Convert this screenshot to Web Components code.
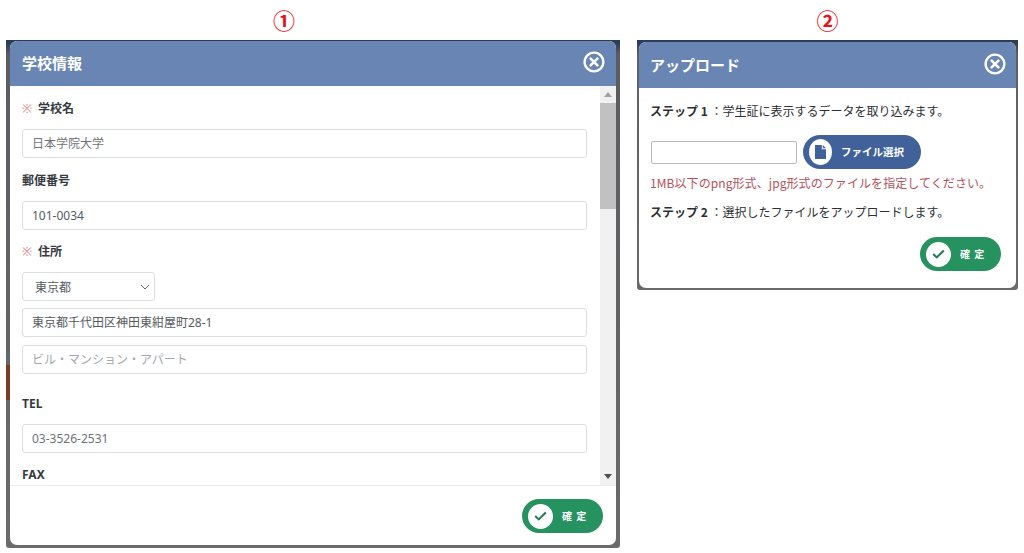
<!DOCTYPE html>
<html lang="ja"><head><meta charset="utf-8"><title>学校情報</title>
<style>
html,body{margin:0;padding:0;background:#fff;overflow:hidden}
body{width:1024px;height:553px;font-family:"Noto Sans","Noto Sans CJK JP",sans-serif;color:#212529}
</style></head><body>
<screen-board>
  <modal-panel slot="a" mark="①" heading="学校情報" variant="large">
    <form-field label="学校名" required><text-box value="日本学院大学" dim></text-box></form-field>
    <form-field label="郵便番号"><text-box value="101-0034"></text-box></form-field>
    <form-field label="住所" required>
      <select-box value="東京都"></select-box>
      <text-box value="東京都千代田区神田東紺屋町28-1" gap></text-box>
      <text-box placeholder="ビル・マンション・アパート" gap></text-box>
    </form-field>
    <form-field label="TEL" wide><text-box value="03-3526-2531" dim></text-box></form-field>
    <form-field label="FAX"><text-box value=""></text-box></form-field>
    <pill-button slot="footer" tone="green" icon="check" text="確 定"></pill-button>
  </modal-panel>
  <modal-panel slot="b" mark="②" heading="アップロード" variant="small">
    <upload-steps></upload-steps>
    <pill-button slot="footer" tone="green" icon="check" text="確 定"></pill-button>
  </modal-panel>
</screen-board>
<script>
function def(name, css, html, init){
  customElements.define(name, class extends HTMLElement{
    connectedCallback(){
      if(this.shadowRoot) return;
      const r=this.attachShadow({mode:'open'});
      r.innerHTML='<style>'+css+'</style>'+(typeof html==='function'?html(this):html);
      if(init) init(this,r);
    }
  });
}
def('screen-board',
 `:host{display:flex;width:1024px;height:553px;padding:0 0 0 6px;box-sizing:border-box;align-items:flex-start;gap:17px}`,
 `<slot name="a"></slot><slot name="b"></slot>`);
def('modal-panel',
 `:host{display:flex;flex-direction:column;align-items:center;flex:none;color:#212529}
  :host([variant=large]){width:614px}
  :host([variant=small]){width:381px}
  .mark{font:700 22px/22px "Noto Sans CJK JP",sans-serif;color:#e3141c;height:22px;margin-top:8px;margin-bottom:10px}
  :host([variant=large]) .mark{margin-right:58px}
  .frame{width:100%;box-sizing:border-box;padding:1px 4px 3px 4px;border-radius:0 0 3px 3px;
    background:linear-gradient(#2c3c58 0,#2c3c58 3px,#5f6062 14px,#6a6a6a 100%)}
  :host([variant=large]) .frame{background:linear-gradient(#7a3a28,#7a3a28) 0 325px/4px 35px no-repeat,linear-gradient(#2c3c58 0,#2c3c58 3px,#5a5c60 14px,#6b6b6b 100%);height:508px}
  :host([variant=small]) .frame{height:250px;padding:2px 2px 2px 2px}
  .box{background:#fff;border-radius:7px;height:100%;display:flex;flex-direction:column;overflow:hidden}
  header{flex:none;height:45px;background:#6885b4;color:#fff;display:flex;align-items:center;justify-content:space-between;padding:0 11px 0 12px;font:700 15px/1 "Noto Sans CJK JP",sans-serif}
  :host([variant=small]) header{height:46px;padding:0 10px 0 11px}
  header span{padding-bottom:3px}
  :host([variant=small]) header span{padding-bottom:1px}
  svg.x{width:22px;height:22px;display:block;margin-top:-3px}
  .main{flex:1;min-height:0;display:flex}
  .scroll{flex:1;min-width:0;overflow:hidden;padding:14px 13px 0 12px}
  :host([variant=small]) .scroll{padding:14px 11px 0 11px;display:block}
  .bar{flex:none;width:16px;background:#f1f1f1;display:flex;flex-direction:column;align-items:center}
  :host([variant=small]) .bar{display:none}
  .arrow{height:17px;display:flex;align-items:center;justify-content:center;flex:none}
  .thumb{height:106px;width:100%;background:#c1c1c1;flex:none}
  .track{flex:1}
  footer{flex:none;display:flex;justify-content:flex-end;padding:13px 13px 13px 12px;border-top:1px solid #e9ecef;height:60px;box-sizing:border-box}
  :host([variant=small]) footer{border-top:0;padding:0 15px 0 0;height:auto;margin-bottom:17px}`,
 h=>`<div class="mark">${h.getAttribute('mark')}</div>
  <div class="frame"><div class="box">
   <header><span>${h.getAttribute('heading')}</span>
    <svg class="x" viewBox="0 0 22 22" aria-hidden="true"><circle cx="11" cy="11" r="9.4" fill="none" stroke="#fff" stroke-width="2.4"/><path d="M7.6 7.6l6.8 6.8M14.4 7.6l-6.8 6.8" stroke="#fff" stroke-width="2.6" stroke-linecap="round"/></svg></header>
   <div class="main"><div class="scroll"><slot></slot></div>
    <div class="bar"><div class="arrow"><svg width="8" height="5" viewBox="0 0 8 5"><path d="M4 0L8 5H0z" fill="#a3a3a3"/></svg></div><div class="thumb"></div><div class="track"></div><div class="arrow"><svg width="8" height="5" viewBox="0 0 8 5"><path d="M0 0H8L4 5z" fill="#505050"/></svg></div></div></div>
   <footer><slot name="footer"></slot></footer>
  </div></div>`);
def('form-field',
 `:host{display:block;margin-bottom:13.5px}
  :host([wide]){margin-top:21px;margin-bottom:12.5px}
  .l{font:700 12px/18px "Noto Sans","Noto Sans CJK JP",sans-serif;color:#343a40;margin-bottom:11px;height:18px}
  i{font-style:normal;font-weight:400;color:#e08a8a;margin-right:6px}`,
 h=>`<div class="l">${h.hasAttribute('required')?'<i>※</i>':''}${h.getAttribute('label')}</div><slot></slot>`);
def('text-box',
 `:host{display:block;width:565px}
  :host([gap]){margin-top:7px}
  :host([gap]:last-of-type){margin-top:8px}
  div{box-sizing:border-box;height:29px;border:1px solid #dcdfe2;border-radius:3px;background:#fff;padding:0 9px;font:400 12px/27px "Noto Sans","Noto Sans CJK JP",sans-serif;color:#555b61;white-space:nowrap}
  :host([dim]) div{color:#6c7278}
  .p{color:#a4a8ac}`,
 h=>{const v=h.getAttribute('value');const p=h.getAttribute('placeholder');return `<div class="${p?'p':''}">${v||p||''}</div>`});
def('select-box',
 `:host{display:block;width:133px}
  div{box-sizing:border-box;height:29px;border:1px solid #dcdfe2;border-radius:3px;padding:0 4px 0 12px;font:400 12px/26px "Noto Sans CJK JP",sans-serif;color:#555b61;display:flex;justify-content:space-between;align-items:center}`,
 h=>`<div><span>${h.getAttribute('value')}</span><svg width="10" height="6" viewBox="0 0 10 6"><path d="M1 1l4 4 4-4" fill="none" stroke="#666" stroke-width="1"/></svg></div>`);
def('pill-button',
 `:host{display:inline-flex;align-items:center;height:34px;border-radius:17px;color:#fff;padding:0 0 0 6px;box-sizing:border-box;font:700 10px/1 "Noto Sans CJK JP",sans-serif;white-space:nowrap}
  :host([tone=green]){background:#26925f;width:81px}
  :host([tone=blue]){background:#41619a;width:118px;font-size:10.5px}
  .c{width:25px;height:25px;border-radius:50%;background:#fff;display:flex;align-items:center;justify-content:center;flex:none;margin-right:9px}
  :host([tone=blue]) .c{width:23px;height:26px;margin-right:9px}
  :host([tone=green]) span{letter-spacing:1px}`,
 h=>{const ic=h.getAttribute('icon')==='check'
   ?'<svg width="13" height="10" viewBox="0 0 13 10"><path d="M1.2 5l3.6 3.4 7-7" fill="none" stroke="#2a7a58" stroke-width="2.1"/></svg>'
   :'<svg width="11" height="14" viewBox="0 0 11 14"><path d="M0 0H6.8V4.2H11V14H0z M7.8 0L11 3.2H7.8z" fill="#41619a"/></svg>';
   return `<div class="c">${ic}</div><span>${h.getAttribute('text')}</span>`});
def('upload-steps',
 `:host{display:block;font:400 12px/18px "Noto Sans CJK JP",sans-serif;color:#2c3034}
  b{font-weight:700}
  p{margin:0}
  .row{display:flex;align-items:center;gap:6px;margin-top:15px}
  .inp{width:146px;margin-left:1px;height:23px;box-sizing:border-box;border:1px solid #b9b9b9;border-radius:2px;background:#fff}
  .err{color:#b5505a;margin-top:5px;white-space:nowrap;letter-spacing:.08px}
  .s2{margin-top:11px}
  .t{white-space:nowrap}`,
 `<p class="t"><b>ステップ 1</b> ：学生証に表示するデータを取り込みます。</p>
  <div class="row"><div class="inp"></div><pill-button tone="blue" icon="file" text="ファイル選択"></pill-button></div>
  <p class="err">1MB以下のpng形式、jpg形式のファイルを指定してください。</p>
  <p class="t s2"><b>ステップ 2</b> ：選択したファイルをアップロードします。</p>`);
</script>
</body></html>
